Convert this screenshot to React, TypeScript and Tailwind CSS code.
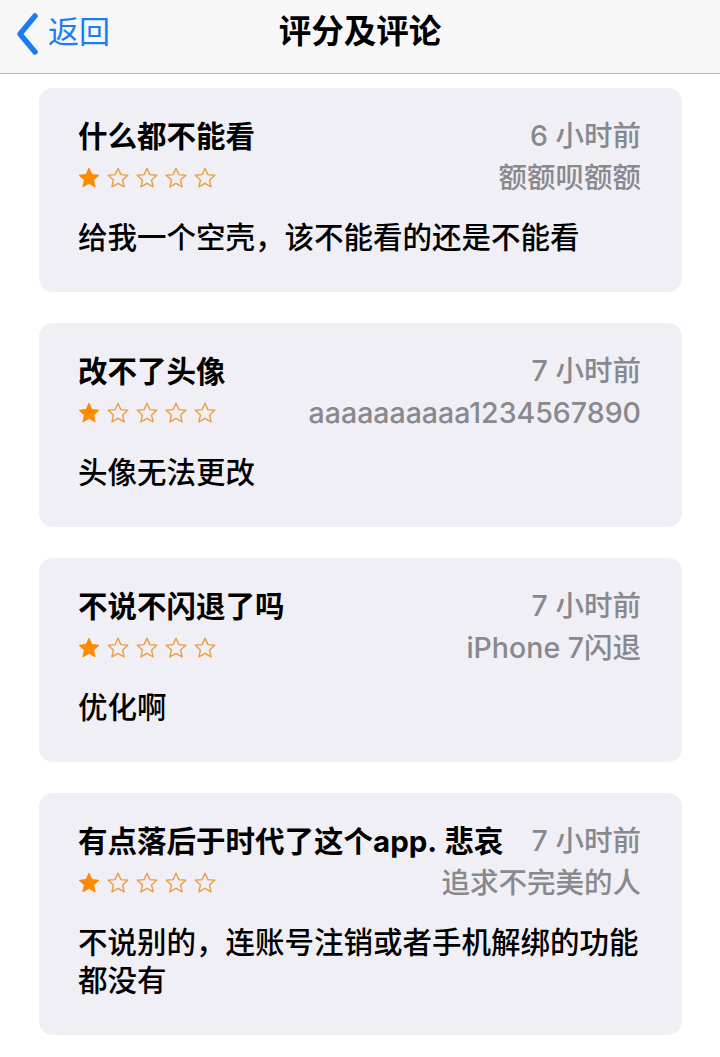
import { ReactNode } from 'react';

type Review = {
  title: ReactNode;
  time: string;
  author: string;
  body: string;
  stars: number;
};

const reviews: Review[] = [
  { title: '什么都不能看', time: '6 小时前', author: '额额呗额额', body: '给我一个空壳，该不能看的还是不能看', stars: 1 },
  { title: '改不了头像', time: '7 小时前', author: 'aaaaaaaaaa1234567890', body: '头像无法更改', stars: 1 },
  { title: '不说不闪退了吗', time: '7 小时前', author: 'iPhone 7闪退', body: '优化啊', stars: 1 },
  {
    title: (
      <>
        有点落后于时代了这个<span className="font-bold">app.</span> 悲哀
      </>
    ),
    time: '7 小时前',
    author: '追求不完美的人',
    body: '不说别的，连账号注销或者手机解绑的功能都没有',
    stars: 1,
  },
];

function Star({ filled }: { filled: boolean }) {
  return (
    <svg width="24" height="24" viewBox="0 0 24 24" className="shrink-0">
      <path
        d="M12 2.2l2.9 6.4 6.9.7-5.2 4.7 1.5 6.9L12 17.3l-6.1 3.6 1.5-6.9-5.2-4.7 6.9-.7z"
        fill={filled ? '#ff8a00' : 'none'}
        stroke={filled ? '#ff8a00' : '#eb9d45'}
        strokeWidth={filled ? 1 : 1.4}
        strokeLinejoin="round"
      />
    </svg>
  );
}

function ReviewCard({ review }: { review: Review }) {
  return (
    <div className="rounded-[14px] bg-[#f0eff5] pl-[39px] pr-[41px] pt-[28px] pb-[36px]">
      <div className="flex items-center justify-between gap-4 h-[40px]">
        <div className="text-[29.5px] font-semibold text-black whitespace-nowrap">{review.title}</div>
        <div className="text-[28.5px] font-medium text-[#88888d] whitespace-nowrap">{review.time}</div>
      </div>
      <div className="flex items-center justify-between mt-[2px] h-[40px]">
        <div className="flex gap-[5px] -ml-[1px]">
          {[0, 1, 2, 3, 4].map((i) => (
            <Star key={i} filled={i < review.stars} />
          ))}
        </div>
        <div className="text-[28.5px] font-medium text-[#88888d] whitespace-nowrap">{review.author}</div>
      </div>
      <p className="mt-[20px] text-[29.5px] leading-[38px] font-medium text-black">{review.body}</p>
    </div>
  );
}

export default function App() {
  return (
    <div className="min-h-screen bg-white font-['Inter','Noto_Sans_CJK_SC',sans-serif]">
      {/* Nav bar */}
      <div className="relative h-[74px] bg-[#f7f7f8] border-b border-[#b8b8bc] flex items-center justify-center">
        <div className="absolute left-[14px] top-0 h-full flex items-center text-[#1b7cf4]">
          <svg width="28" height="44" viewBox="0 0 28 44" className="-mt-[6px]">
            <path d="M21 4L6 22l15 18" fill="none" stroke="currentColor" strokeWidth="5.5" strokeLinecap="round" strokeLinejoin="round" />
          </svg>
          <span className="text-[31px] ml-[6px] -mt-[8px]">返回</span>
        </div>
        <h1 className="text-[32.5px] font-bold text-black -mt-[8px]">评分及评论</h1>
      </div>

      {/* Review list */}
      <div className="px-[39px] pt-[14px] flex flex-col gap-[31px] w-[721px]">
        {reviews.map((r, i) => (
          <ReviewCard key={i} review={r} />
        ))}
      </div>
    </div>
  );
}
